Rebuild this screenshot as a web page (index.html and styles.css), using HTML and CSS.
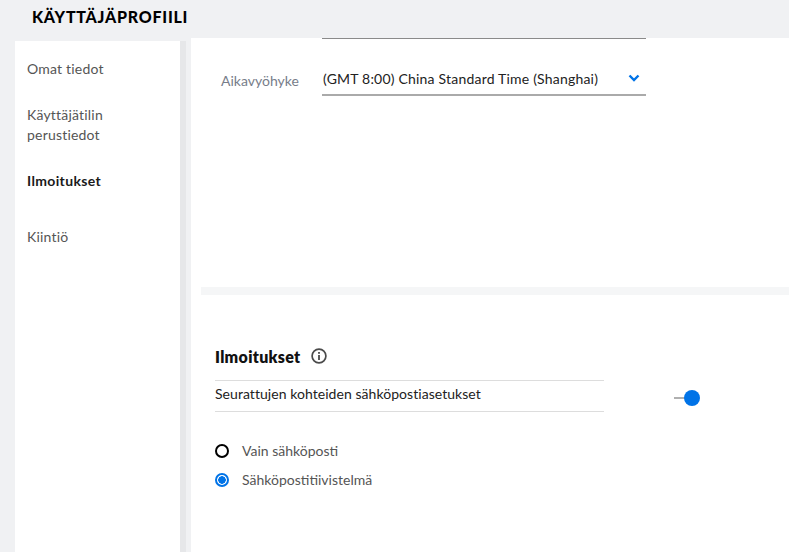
FILE: index.html
```html
<!DOCTYPE html>
<html lang="fi">
<head>
<meta charset="utf-8">
<title>Käyttäjäprofiili</title>
<link rel="stylesheet" href="styles.css">
</head>
<body>
<div class="app">
  <header class="topbar"><h1 class="title">KÄYTTÄJÄPROFIILI</h1></header>
  <div class="content">
    <nav class="side">
      <a class="nav-item nav-a">Omat tiedot</a>
      <a class="nav-item nav-b">Käyttäjätilin<br>perustiedot</a>
      <a class="nav-item nav-c active">Ilmoitukset</a>
      <a class="nav-item nav-d">Kiintiö</a>
    </nav>
    <div class="gutter"></div>
    <main class="main">
      <section class="tz">
        <div class="prev-line"></div>
        <div class="tz-row">
          <span class="tz-label">Aikavyöhyke</span>
          <div class="select">
            <span class="select-text">(GMT 8:00) China Standard Time (Shanghai)</span>
            <svg class="chev" width="12" height="8" viewBox="0 0 12 8"><path d="M1.5 1.5 6 6l4.5-4.5" fill="none" stroke="#0073e7" stroke-width="2.4"/></svg>
          </div>
        </div>
      </section>
      <div class="divider"></div>
      <section class="notify">
        <div class="notify-head">
          <h2 class="notify-title">Ilmoitukset</h2>
          <svg class="info" width="16" height="16" viewBox="0 0 16 16"><circle cx="8" cy="8" r="6.9" fill="none" stroke="#4a4a4a" stroke-width="1.7"/><rect x="7.1" y="7" width="1.8" height="5" fill="#4a4a4a"/><rect x="7.1" y="4" width="1.8" height="1.8" fill="#4a4a4a"/></svg>
        </div>
        <div class="setting-row">
          <div class="setting-label">Seurattujen kohteiden sähköpostiasetukset</div>
          <div class="toggle"><span class="toggle-track"></span><span class="toggle-knob"></span></div>
        </div>
        <div class="radios">
          <label class="radio-row"><span class="radio"></span><span class="radio-text">Vain sähköposti</span></label>
          <label class="radio-row"><span class="radio on"></span><span class="radio-text">Sähköpostitiivistelmä</span></label>
        </div>
      </section>
    </main>
  </div>
</div>
</body>
</html>
```
FILE: styles.css
```css
* { box-sizing: border-box; }
html, body { margin: 0; height: 100%; }
body { font-family: "Lato", "Open Sans", sans-serif; background: #f0f1f3; overflow: hidden; }
.app { width: 789px; height: 552px; display: flex; flex-direction: column; }
.topbar { height: 38px; flex: none; padding-left: 32px; }
.title { margin: 0; font-size: 16px; line-height: 34px; font-weight: 900; color: #000; letter-spacing: .75px; }
.content { flex: 1; display: flex; min-height: 0; }
.side { width: 165px; margin: 3px 0 0 15px; background: #fff; padding-left: 12px; flex: none; }
.nav-item { display: block; font-size: 14px; line-height: 20px; color: #555; letter-spacing: .2px; }
.nav-a { margin-top: 18px; }
.nav-b { margin-top: 26px; }
.nav-c { margin-top: 26px; }
.nav-d { margin-top: 36px; }
.active { font-weight: 700; color: #1a1a1a; letter-spacing: .35px; }
.gutter { width: 11px; flex: none; margin-top: 3px; background: linear-gradient(to right, #e6e7e9 0 6px, #f0f1f3 6px); }
.main { flex: 1; background: #fff; min-width: 0; }
.tz { height: 249px; padding-left: 131px; }
.prev-line { width: 324px; height: 1px; background: #8a8a8a; }
.tz-row { display: flex; align-items: center; margin: 21px 0 0 -101px; }
.tz-label { width: 101px; font-size: 14px; color: #777d8a; margin-top: 4px; white-space: nowrap; flex: none; }
.select { width: 324px; height: 36px; border-bottom: 2px solid #aaa; display: flex; align-items: center; justify-content: space-between; padding: 2px 6px 0 1px; }
.select-text { font-size: 14px; color: #222; white-space: nowrap; letter-spacing: .2px; }
.divider { height: 8px; margin-left: 10px; background: #f5f6f7; }
.notify { padding: 51px 0 0 24px; }
.notify-head { display: flex; align-items: center; gap: 10px; height: 20px; }
.notify-title { margin: 0; font-size: 16px; font-weight: 800; color: #111; letter-spacing: .3px; }
.setting-row { display: flex; align-items: center; margin-top: 14px; }
.setting-label { width: 389px; height: 32px; border-top: 1px solid #ddd; border-bottom: 1px solid #ddd; font-size: 14px; line-height: 26px; color: #222; letter-spacing: .05px; }
.toggle { position: relative; width: 26px; height: 16px; margin: 3px 0 0 70px; }
.toggle-track { position: absolute; left: 0; top: 7px; width: 12px; height: 2px; background: #b0b0b0; }
.toggle-knob { position: absolute; left: 10px; top: 0; width: 16px; height: 16px; border-radius: 50%; background: #0073e7; }
.radios { margin-top: 24px; }
.radio-row { display: flex; align-items: center; height: 29px; gap: 13px; }
.radio { width: 14px; height: 14px; border-radius: 50%; border: 2px solid #000; flex: none; }
.radio.on { border-color: #0073e7; background: radial-gradient(circle, #0073e7 0 3.5px, #fff 4px); }
.radio-text { font-size: 14px; color: #555; }
```
